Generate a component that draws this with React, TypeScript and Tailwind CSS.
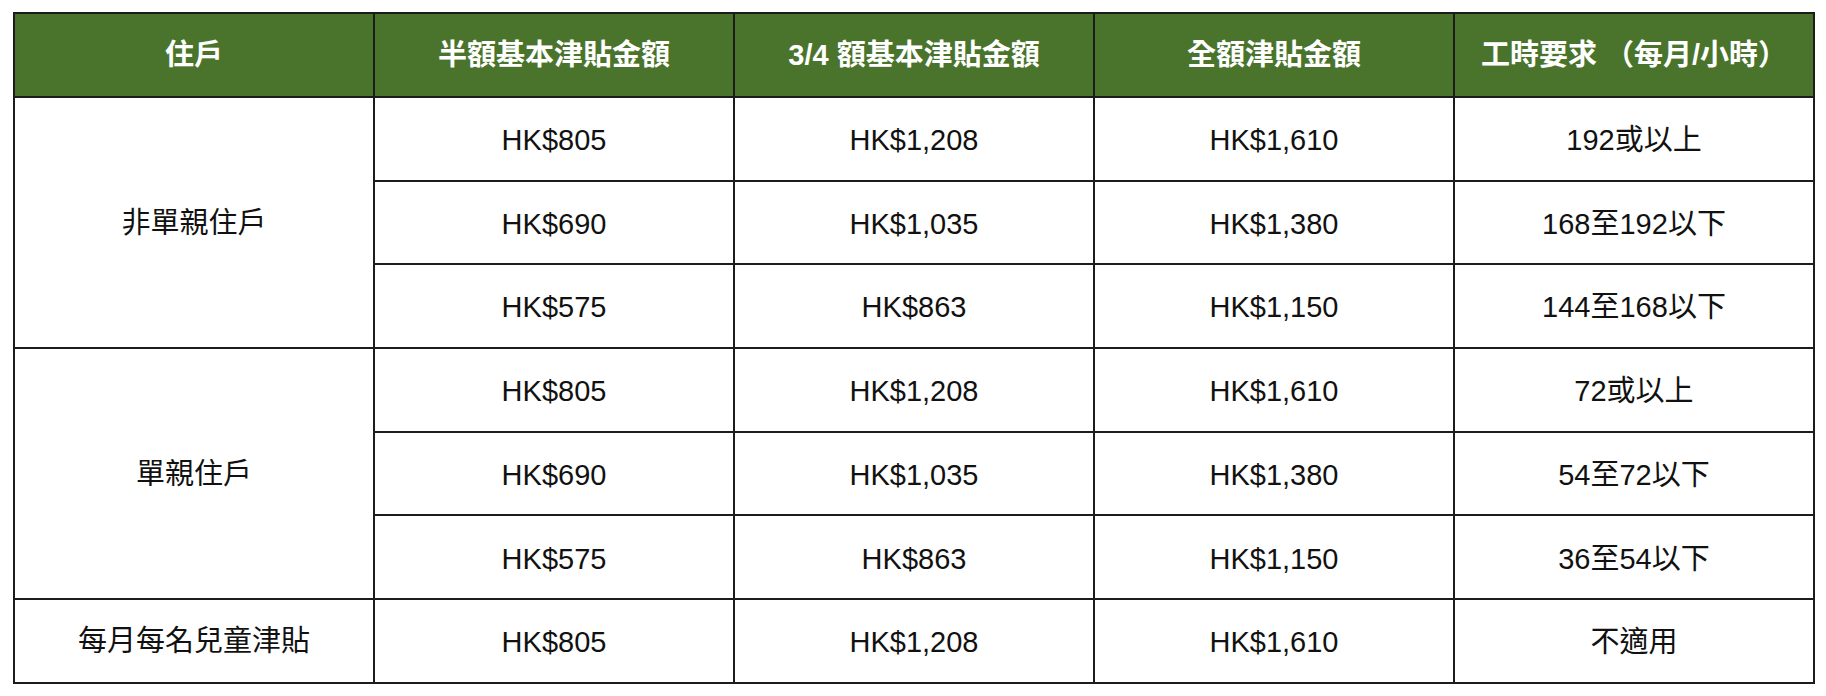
const groups = [
  {
    label: "非單親住戶",
    rows: [
      ["HK$805", "HK$1,208", "HK$1,610", "192或以上"],
      ["HK$690", "HK$1,035", "HK$1,380", "168至192以下"],
      ["HK$575", "HK$863", "HK$1,150", "144至168以下"],
    ],
  },
  {
    label: "單親住戶",
    rows: [
      ["HK$805", "HK$1,208", "HK$1,610", "72或以上"],
      ["HK$690", "HK$1,035", "HK$1,380", "54至72以下"],
      ["HK$575", "HK$863", "HK$1,150", "36至54以下"],
    ],
  },
  {
    label: "每月每名兒童津貼",
    rows: [["HK$805", "HK$1,208", "HK$1,610", "不適用"]],
  },
];

const headers = ["住戶", "半額基本津貼金額", "3/4 額基本津貼金額", "全額津貼金額", "工時要求 （每月/小時）"];

export default function App() {
  return (
    <div className="min-h-screen bg-white pt-[12px] pl-[13px] font-['Liberation_Sans','Noto_Sans_CJK_TC',sans-serif]">
      <table className="w-[1800px] table-fixed border-collapse border-[2px] border-[#1c1c1c] text-[29px] text-[#111]">
        <thead>
          <tr className="h-[84px] bg-[#4a742c]">
            {headers.map((h) => (
              <th key={h} className="w-[360px] border-[2px] border-[#1c1c1c] pt-[2px] text-center font-bold text-white">
                {h}
              </th>
            ))}
          </tr>
        </thead>
        <tbody>
          {groups.map((g) =>
            g.rows.map((row, i) => (
              <tr key={g.label + i} className="h-[83.7px]">
                {i === 0 && (
                  <td rowSpan={g.rows.length} className="border-[2px] border-[#1c1c1c] pt-[2px] text-center">
                    {g.label}
                  </td>
                )}
                {row.map((cell, j) => (
                  <td key={j} className="border-[2px] border-[#1c1c1c] pt-[4px] text-center">
                    {cell}
                  </td>
                ))}
              </tr>
            ))
          )}
        </tbody>
      </table>
    </div>
  );
}
